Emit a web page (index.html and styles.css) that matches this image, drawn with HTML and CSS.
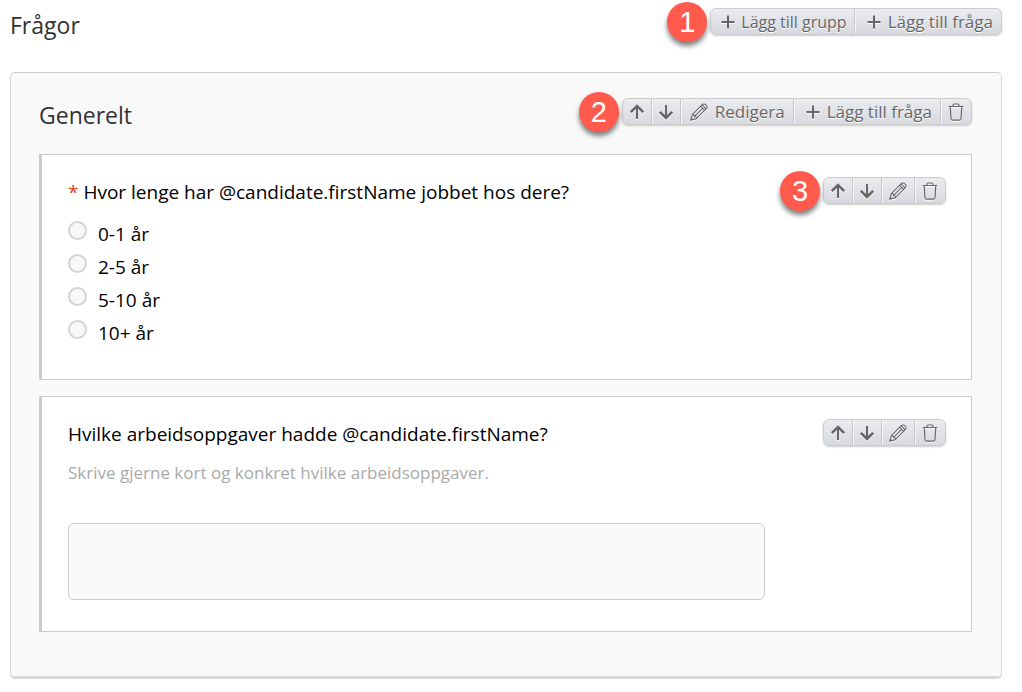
FILE: index.html
```html
<!DOCTYPE html>
<html lang="sv">
<head>
  <meta charset="UTF-8" />
  <meta name="viewport" content="width=device-width, initial-scale=1" />
  <title>Frågor</title>
  <link rel="stylesheet" href="styles.css">
</head>

<body>

  <!-- Ikoner -->
  <svg class="sprite" aria-hidden="true">
    <symbol id="icon-plus" viewBox="0 0 16 16">
      <path d="M8 1.500v13M1.500 8h13" fill="none" stroke="currentColor" stroke-width="2" />
    </symbol>
    <symbol id="icon-up" viewBox="0 0 16 16">
      <path d="M8 15V2" fill="none" stroke="currentColor" stroke-width="2" />
      <path d="M1.800 8.200L8 2l6.200 6.200" fill="none" stroke="currentColor" stroke-width="2.600" />
    </symbol>
    <symbol id="icon-down" viewBox="0 0 16 16">
      <path d="M8 1v13" fill="none" stroke="currentColor" stroke-width="2" />
      <path d="M1.800 7.800L8 14l6.200-6.200" fill="none" stroke="currentColor" stroke-width="2.600" />
    </symbol>
    <symbol id="icon-pencil" viewBox="0 0 18 18">
      <g fill="none" stroke="currentColor" stroke-width="1.1" stroke-linejoin="round">
        <path d="M.8 17.2l1.6-5.6L12.3 1.7c1-1 2.4-1 3.3 0l.7.7c1 .9 1 2.300 0 3.300L6.400 15.600z" />
        <path d="M2.400 11.600c1.500-.1 2.200.6 2 2 1.500-.2 2.200.5 2 2M10.700 3.300l4 4M12.100 1.900l4 4M4.400 13.600l8.300-8.300" />
      </g>
      <path d="M.6 17.400l.8-2.700 1.900 1.900z" fill="currentColor" />
    </symbol>
    <symbol id="icon-trash" viewBox="0 0 16 18">
      <g fill="none" stroke="currentColor" stroke-width="1.200" stroke-linejoin="round">
        <path d="M.8 3.500h14.400M5 3.300V2.200C5 1.400 5.400 1 6.200 1h3.600c.8 0 1.200.4 1.200 1.200v1.100" />
        <path d="M2.200 3.500l.8 12.200c.1 1 .6 1.500 1.500 1.500h7c.9 0 1.400-.5 1.500-1.500l.8-12.200" />
      </g>
    </symbol>
  </svg>

  <main class="page">
    <header class="section-head">
      <h1>Frågor</h1>
      <div class="btn-group">
        <span class="badge">1</span>
        <button type="button" class="btn btn-add-group"><svg class="icon"><use href="#icon-plus" /></svg>Lägg till grupp</button>
        <button type="button" class="btn btn-add"><svg class="icon"><use href="#icon-plus" /></svg>Lägg till fråga</button>
      </div>
    </header>

    <section class="group">
      <header class="section-head group-head">
        <h2>Generelt</h2>
        <div class="btn-group">
          <span class="badge">2</span>
          <button type="button" class="btn btn-icon" aria-label="Flytta upp"><svg class="icon"><use href="#icon-up" /></svg></button>
          <button type="button" class="btn btn-icon" aria-label="Flytta ner"><svg class="icon"><use href="#icon-down" /></svg></button>
          <button type="button" class="btn"><svg class="icon icon-pencil"><use href="#icon-pencil" /></svg>Redigera</button>
          <button type="button" class="btn btn-add"><svg class="icon"><use href="#icon-plus" /></svg>Lägg till fråga</button>
          <button type="button" class="btn btn-icon" aria-label="Ta bort"><svg class="icon icon-trash"><use href="#icon-trash" /></svg></button>
        </div>
      </header>

      <article class="question">
        <div class="question-head">
          <h3 id="q1"><span class="required">*</span> Hvor lenge har @candidate.firstName jobbet hos dere?</h3>
          <div class="btn-group">
            <span class="badge">3</span>
            <button type="button" class="btn btn-icon" aria-label="Flytta upp"><svg class="icon"><use href="#icon-up" /></svg></button>
            <button type="button" class="btn btn-icon" aria-label="Flytta ner"><svg class="icon"><use href="#icon-down" /></svg></button>
            <button type="button" class="btn btn-icon" aria-label="Redigera"><svg class="icon icon-pencil"><use href="#icon-pencil" /></svg></button>
            <button type="button" class="btn btn-icon" aria-label="Ta bort"><svg class="icon icon-trash"><use href="#icon-trash" /></svg></button>
          </div>
        </div>
        <div class="choices" role="radiogroup" aria-labelledby="q1">
          <label class="choice"><input type="radio" name="years" value="0-1"><span>0-1 år</span></label>
          <label class="choice"><input type="radio" name="years" value="2-5"><span>2-5 år</span></label>
          <label class="choice"><input type="radio" name="years" value="5-10"><span>5-10 år</span></label>
          <label class="choice"><input type="radio" name="years" value="10+"><span>10+ år</span></label>
        </div>
      </article>

      <article class="question">
        <div class="question-head">
          <h3><label for="tasks">Hvilke arbeidsoppgaver hadde @candidate.firstName?</label></h3>
          <div class="btn-group">
            <button type="button" class="btn btn-icon" aria-label="Flytta upp"><svg class="icon"><use href="#icon-up" /></svg></button>
            <button type="button" class="btn btn-icon" aria-label="Flytta ner"><svg class="icon"><use href="#icon-down" /></svg></button>
            <button type="button" class="btn btn-icon" aria-label="Redigera"><svg class="icon icon-pencil"><use href="#icon-pencil" /></svg></button>
            <button type="button" class="btn btn-icon" aria-label="Ta bort"><svg class="icon icon-trash"><use href="#icon-trash" /></svg></button>
          </div>
        </div>
        <p class="hint" id="tasks-hint">Skrive gjerne kort og konkret hvilke arbeidsoppgaver.</p>
        <textarea id="tasks" class="answer" aria-describedby="tasks-hint"></textarea>
      </article>
    </section>
  </main>

</body>
</html>
```

FILE: styles.css
```css
* {
  box-sizing: border-box;
}

body {
  margin: 0;
  font-family: "Open Sans", sans-serif;
  font-size: 19px;
  color: #000;
  background: #fff;
}

h1,
h2,
h3,
p {
  margin: 0;
  font-weight: 400;
}

.sprite {
  display: none;
}

.page {
  padding: 8px 20px 8px 10px;
}

.section-head,
.question-head {
  display: flex;
  justify-content: space-between;
  align-items: flex-start;
}

.section-head h1,
.section-head h2 {
  font-size: 23px;
  line-height: 34px;
  color: #333;
}

/* Knappar */
.btn-group {
  position: relative;
  display: flex;
  flex-shrink: 0;
  height: 27px;
  border: 1px solid #ccc;
  border-radius: 6px;
  background: linear-gradient(#ebecf0, #d6d9df);
  box-shadow: 0 1px 2px rgba(0, 0, 0, 0.2);
}

.btn {
  display: flex;
  align-items: center;
  gap: 6px;
  padding: 0 8px;
  border: 0;
  background: none;
  font-family: inherit;
  font-size: 17px;
  line-height: 24px;
  color: #666;
  text-shadow: 0 1px 0 #fff;
  cursor: pointer;
}

.btn + .btn {
  border-left: 1px solid #c8c8c8;
  box-shadow: inset 1px 0 0 #f4f5f7;
}

.btn-icon {
  padding: 0 6px;
}

.btn-add {
  padding-left: 11px;
}

.btn-add-group {
  padding: 0 7px 0 9px;
  gap: 5px;
  font-size: 16px;
}

.icon {
  width: 16px;
  height: 16px;
  flex-shrink: 0;
  filter: drop-shadow(0 1px 0 #fff);
}

.icon-pencil {
  width: 20px;
  height: 18px;
}

.icon-trash {
  width: 18px;
  height: 18px;
}

/* Numrerade markörer */
.badge {
  position: absolute;
  top: -7px;
  right: calc(100% + 4px);
  width: 40px;
  height: 40px;
  border-radius: 50%;
  background: #ff5a4c;
  box-shadow: 0 4px 5px rgba(0, 0, 0, 0.5);
  font-family: "Liberation Sans", Arial, sans-serif;
  font-size: 29px;
  line-height: 41px;
  text-align: center;
  color: #fff;
}

/* Frågegrupp */
.group {
  margin-top: 30px;
  padding: 25px 29px 44px 28px;
  border: 1px solid #d8d8d8;
  border-top-color: #ccc;
  border-bottom-width: 3px;
  border-radius: 5px;
  background: #f9f9f9;
}

.group-head {
  margin-bottom: 22px;
}

.question {
  padding: 22px 25px 31px 26px;
  border: 1px solid #ccc;
  border-left-width: 3px;
  background: #fff;
}

.question + .question {
  margin-top: 16px;
}

.question h3 {
  font-size: 19px;
  line-height: 30px;
}

.required {
  color: #e0401c;
}

.choices {
  display: flex;
  flex-direction: column;
  gap: 7px;
  padding: 14px 0 2px;
}

.choice {
  display: flex;
  align-items: flex-start;
  gap: 11px;
}

.choice span {
  line-height: 26px;
}

.choice input {
  appearance: none;
  width: 19px;
  height: 19px;
  margin: 0;
  border: 2px solid #d4d4d4;
  border-radius: 50%;
  background: #f8f8f8;
}

.choice input:checked {
  background: #666;
}

.hint {
  margin-top: 11px;
  font-size: 17px;
  line-height: 26px;
  color: #aaa;
}

.answer {
  display: block;
  width: 100%;
  max-width: 697px;
  height: 77px;
  margin-top: 37px;
  padding: 8px;
  border: 1px solid #ccc;
  border-radius: 6px;
  background: #fafafa;
  font: inherit;
  resize: none;
}
```
